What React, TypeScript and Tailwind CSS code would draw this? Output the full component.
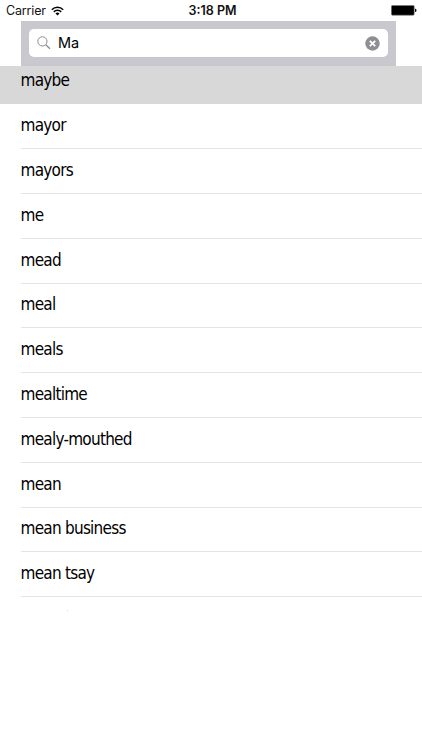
const WORDS = [
  "maybe",
  "mayor",
  "mayors",
  "me",
  "mead",
  "meal",
  "meals",
  "mealtime",
  "mealy-mouthed",
  "mean",
  "mean business",
  "mean tsay",
];

function StatusBar() {
  return (
    <div className="relative flex h-[21px] items-center justify-between px-[6px] pt-px text-[12.5px] text-[#111]">
      <div className="flex items-center gap-[5px]">
        <span className="-tracking-[0.15px]">Carrier</span>
        <svg className="-mt-px" width="13" height="10" viewBox="0 0 13 10" fill="none" stroke="#000" strokeWidth="1.5">
          <path d="M0.8 3.7a8.1 8.1 0 0 1 11.4 0" />
          <path d="M2.8 5.9a5.2 5.2 0 0 1 7.4 0" />
          <path d="M6.5 9.4 4.5 7.4a2.8 2.8 0 0 1 4 0z" fill="#000" stroke="none" />
        </svg>
      </div>
      <span className="absolute inset-x-0 pl-[3px] text-center font-semibold">3:18 PM</span>
      <svg className="-mr-px -mt-px" width="26" height="11" viewBox="0 0 26 11">
        <rect x="0.4" y="0.4" width="22.8" height="9.8" rx="1.2" fill="#000" stroke="#777" strokeWidth="0.6" />
        <path d="M24 3.8h.5q1 .3 1 1.6t-1 1.6H24z" fill="#111" />
      </svg>
    </div>
  );
}

function SearchBar() {
  return (
    <div className="ml-[21px] mr-[26px] h-[45px] bg-[#c9c8ce] px-2 pt-2">
      <div className="flex h-7 items-center rounded-[5px] bg-white px-2">
        <svg width="14" height="14" viewBox="0 0 14 14" fill="none" stroke="#8b8b90">
          <circle cx="5.4" cy="5.4" r="4.6" strokeWidth="1" />
          <path d="m8.8 8.8 4.2 4" strokeWidth="1.3" />
        </svg>
        <span className="ml-[7px] flex-1 text-[14.5px] text-black">Ma</span>
        <svg width="15" height="15" viewBox="0 0 15 15">
          <circle cx="7.5" cy="7.5" r="7.2" fill="#8e8e93" />
          <path d="m4.8 4.8 5.4 5.4m0-5.4-5.4 5.4" stroke="#fff" strokeWidth="1.8" />
        </svg>
      </div>
    </div>
  );
}

export default function App() {
  const [selected, ...rest] = WORDS;

  return (
    <div className="h-[750px] w-[422px] overflow-hidden bg-white font-['Inter',sans-serif]">
      <StatusBar />
      <SearchBar />
      <ul className="h-[546px] overflow-hidden font-['DejaVu_Sans_Condensed','DejaVu_Sans',sans-serif] text-[17px] leading-5 -tracking-[0.75px] text-black [font-stretch:condensed]">
        <li className="h-[38.4px] bg-[#d8d8d8] pl-[20.5px] pt-[4px]">{selected}</li>
        {rest.map((word) => (
          <li key={word} className="h-[44.8px] pl-[20.5px]">
            <div className="h-full border-b border-[#e4e4e5] pt-[10.8px]">{word}</div>
          </li>
        ))}
        <li className="pl-[67px] pt-[13px]">
          <div className="h-px w-px bg-[#d5d5d5]" />
        </li>
      </ul>
    </div>
  );
}
